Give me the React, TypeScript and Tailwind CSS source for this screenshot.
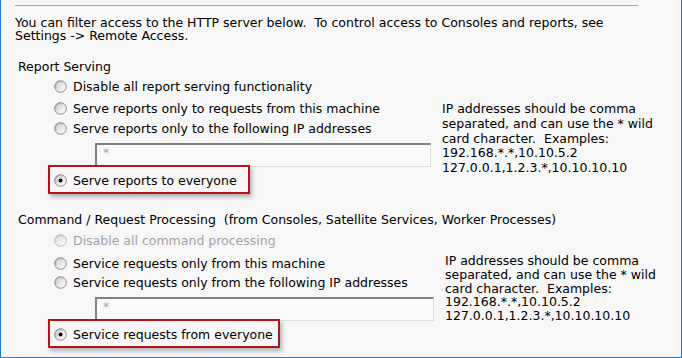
import React from "react";

function Radio({ checked = false, disabled = false }: { checked?: boolean; disabled?: boolean }) {
  const id = checked ? "rgc" : disabled ? "rgd" : "rgu";
  return (
    <svg width="13" height="13" viewBox="0 0 13 13" className="shrink-0">
      <defs>
        <linearGradient id={id} x1="0" y1="0" x2="1" y2="1">
          <stop offset="0" stopColor={disabled ? "#d8d8d8" : "#d0d0d0"} />
          <stop offset="1" stopColor="#ffffff" />
        </linearGradient>
      </defs>
      <circle cx="6.5" cy="6.5" r="5.8" fill={`url(#${id})`} stroke={disabled ? "#b8b8b8" : "#8c8c8c"} strokeWidth="1" />
      <path d="M2.2 8.5 A4.6 4.6 0 0 1 8.5 2.2" fill="none" stroke={disabled ? "#c8c8c8" : "#a8a8a8"} strokeWidth="1" />
      {checked && <circle cx="6.5" cy="6.5" r="2" fill="#000" />}
    </svg>
  );
}

function RadioRow({ label, checked, disabled }: { label: string; checked?: boolean; disabled?: boolean }) {
  return (
    <div className="flex items-center h-[13px] gap-[6px]">
      <Radio checked={checked} disabled={disabled} />
      <span className={disabled ? "text-[#a3a3a3]" : "text-black"}>{label}</span>
    </div>
  );
}

function IpInput({ w }: { w: number }) {
  return (
    <div
      className="h-[24px] ml-[41px] border-t-2 border-l-2 border-t-[#828282] border-l-[#828282] border-r border-b border-r-[#dedede] border-b-[#dedede] bg-[#f9f9f9] pl-[6px] pt-[1px] text-[#a8a8a8] leading-[13px]"
      style={{ width: w }}
    >
      *
    </div>
  );
}

function Highlight({ label, w }: { label: string; w: number }) {
  return (
    <div
      className="relative -mt-[2px] -ml-[6px] h-[29px] border-2 border-[#b3141c] shadow-[2px_3px_4px_rgba(0,0,0,0.28)] flex items-center pl-[4px] pt-[1px]"
      style={{ width: w }}
    >
      <RadioRow label={label} checked />
    </div>
  );
}

function InfoText({ className }: { className: string }) {
  return (
    <div className={"whitespace-pre text-black " + className}>
      {"IP addresses should be comma\nseparated, and can use the * wild\ncard character.  Examples:\n192.168.*.*,10.10.5.2\n127.0.0.1,1.2.3.*,10.10.10.10"}
    </div>
  );
}

export default function App() {
  return (
    <div
      className="w-[682px] h-[358px] bg-[#f7f7f7] border-l border-r border-b border-[#1b7fd5] overflow-hidden text-[12.5px] leading-[13px] text-black"
      style={{ fontFamily: '"DejaVu Sans", Verdana, sans-serif' }}
    >
      <div className="mt-[5px] ml-[14px] w-[623px] h-px bg-[#a6a6a6]" />
      <div className="mt-[10px] ml-[14px] whitespace-pre">
        {"You can filter access to the HTTP server below.  To control access to Consoles and reports, see\nSettings -> Remote Access."}
      </div>

      <div className="mt-[18px] ml-[17px]">Report Serving</div>
      <div className="ml-[53px] mt-[7px]">
        <RadioRow label="Disable all report serving functionality" />
        <div className="flex">
          <div className="w-[388px]">
            <div className="mt-[9px]">
              <RadioRow label="Serve reports only to requests from this machine" />
            </div>
            <div className="mt-[7px]">
              <RadioRow label="Serve reports only to the following IP addresses" />
            </div>
            <div className="mt-[8px]">
              <IpInput w={336} />
            </div>
            <Highlight label="Serve reports to everyone" w={202} />
          </div>
          <InfoText className="mt-[9px] leading-[14.75px]" />
        </div>
      </div>

      <div className="mt-[19px] ml-[17px] whitespace-pre">{"Command / Request Processing  (from Consoles, Satellite Services, Worker Processes)"}</div>
      <div className="ml-[53px] mt-[8px]">
        <RadioRow label="Disable all command processing" disabled />
        <div className="flex">
          <div className="w-[391px]">
            <div className="mt-[10px]">
              <RadioRow label="Service requests only from this machine" />
            </div>
            <div className="mt-[6px]">
              <RadioRow label="Service requests only from the following IP addresses" />
            </div>
            <div className="mt-[8px]">
              <IpInput w={339} />
            </div>
            <Highlight label="Service requests from everyone" w={232} />
          </div>
          <InfoText className="mt-[7px] leading-[13.75px]" />
        </div>
      </div>
    </div>
  );
}
